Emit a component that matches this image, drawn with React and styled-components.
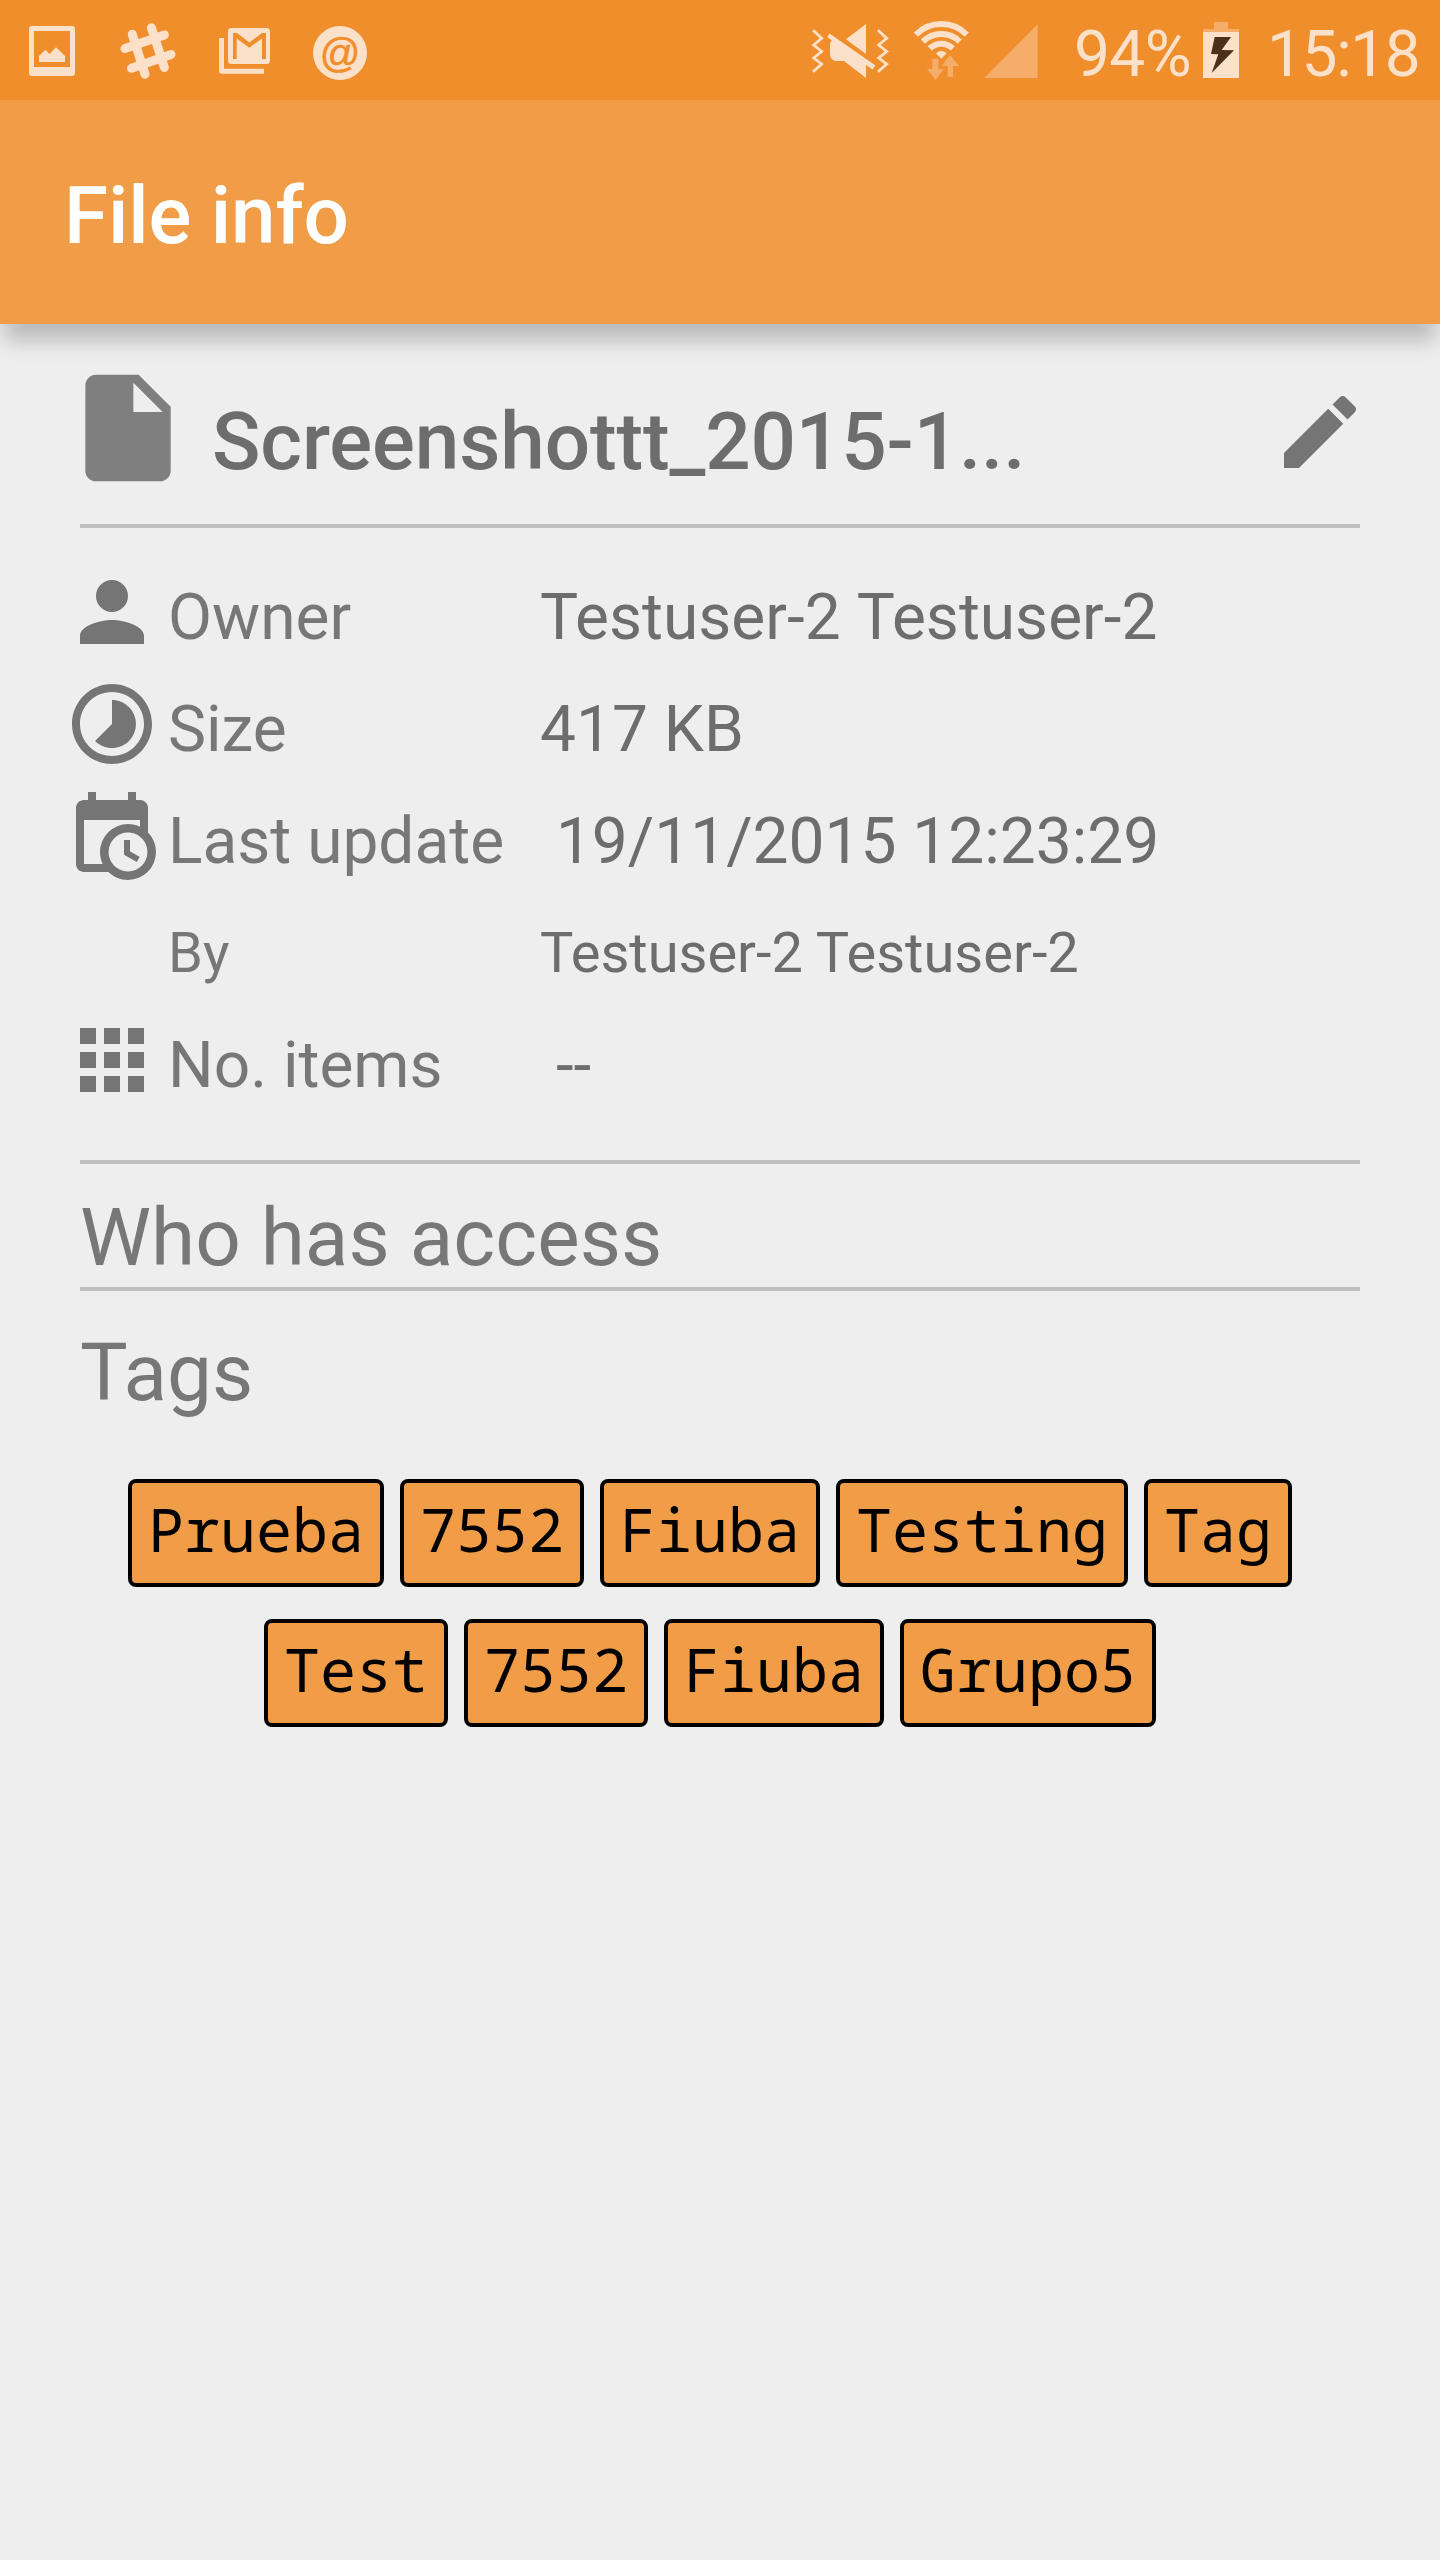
import React from "react";
import styled, { createGlobalStyle } from "styled-components";

const GlobalStyle = createGlobalStyle`
  * { box-sizing: border-box; }
  body { margin: 0; background: #eeeeee; }
`;

const Screen = styled.div`
  display: flex;
  flex-direction: column;
  width: 1440px;
  height: 2560px;
  overflow: hidden;
  background: #eeeeee;
  font-family: Roboto, "Noto Sans", sans-serif;
  color: #777777;
`;

const StatusBar = styled.header`
  display: flex;
  justify-content: space-between;
  height: 100px;
  padding: 0 20px 0 24px;
  background: #f08e2b;
  color: #fbe1ca;
`;

const Notifications = styled.div`
  display: flex;
  gap: 40px;
`;

const SystemIcons = styled.div`
  display: flex;
`;

const StatusIcon = styled.svg`
  display: block;
  flex: none;
  height: 100px;
  margin-left: ${(p) => p.$before || 0}px;
  fill: #fbe1ca;
`;

const AtBadge = styled.div`
  display: flex;
  align-items: center;
  justify-content: center;
  width: 54px;
  height: 54px;
  margin: 26px 1px 0;
  border-radius: 50%;
  background: #fbe1ca;
  color: #f08e2b;
  font: 40px/52px "Liberation Sans", Arial, sans-serif;
  -webkit-text-stroke: 0.6px #f08e2b;
`;

const StatusText = styled.span`
  width: ${(p) => p.$width}px;
  margin-left: ${(p) => p.$before}px;
  font-size: 64px;
  letter-spacing: ${(p) => p.$tracking}px;
  line-height: 110px;
  white-space: nowrap;
`;

const Toolbar = styled.div`
  position: relative;
  z-index: 1;
  display: flex;
  align-items: center;
  flex: none;
  height: 224px;
  padding: 8px 64px 0;
  background: #f19c47;
  box-shadow: 0 21px 20px -4px rgba(0, 0, 0, 0.215);
`;

const Title = styled.h1`
  margin: 0;
  color: #ffffff;
  font-size: 80px;
  font-weight: 500;
  letter-spacing: -0.15px;
  line-height: 100px;
`;

const FileHeader = styled.section`
  display: flex;
  align-items: flex-start;
  height: 200px;
  padding: 0 72px 0 64px;
`;

const Icon = styled.svg`
  display: block;
  flex: none;
  width: ${(p) => p.$size || 96}px;
  height: ${(p) => p.$size || 96}px;
  fill: ${(p) => p.$color || "#757575"};
`;

const FileIcon = styled(Icon)`
  margin-top: 40px;
`;

const EditIcon = styled(Icon)`
  margin: 60px 0 0 auto;
`;

const FileName = styled.h2`
  margin: 68px 0 0 20px;
  color: #6d6d6d;
  font-size: 80px;
  font-weight: 500;
  letter-spacing: -0.12px;
  line-height: 100px;
`;

const Divider = styled.hr`
  flex: none;
  height: 4px;
  margin: 0 80px;
  border: 0;
  background: #bfbfbf;
`;

const InfoList = styled.section`
  height: 632px;
  padding: 33px 64px 0;
`;

const InfoRow = styled.div`
  display: grid;
  grid-template-columns: 104px 372px 1fr;
  height: 112px;
  font-size: ${(p) => (p.$small ? 56 : 64)}px;
  line-height: ${(p) => (p.$small ? 112 : 114)}px;
  white-space: pre;
`;

const RowIcon = styled.div`
  padding-top: 3px;
`;

const Value = styled.span`
  color: #6d6d6d;
  word-spacing: ${(p) => p.$wordSpacing || 0}px;
`;

const SectionTitle = styled.h3`
  flex: none;
  height: ${(p) => p.$height}px;
  margin: 0;
  padding: ${(p) => p.$top}px 80px 0;
  font-size: 80px;
  font-weight: 400;
  letter-spacing: 0.06px;
  line-height: 99px;
`;

const TagList = styled.div`
  display: flex;
  flex-wrap: wrap;
  justify-content: center;
  gap: 32px 16px;
  margin: 56px 100px 0 80px;
`;

const Tag = styled.span`
  height: 108px;
  padding: 0 16px;
  border: 4px solid #000000;
  border-radius: 8px;
  background: #f19c47;
  color: #000000;
  font-family: "Droid Sans Mono", "Noto Sans Mono", "DejaVu Sans Mono", monospace;
  font-size: 60px;
  line-height: 93px;
`;

const paths = {
  file: "M6 2c-1.1 0-1.99.9-1.99 2L4 20c0 1.1.89 2 1.99 2H18c1.1 0 2-.9 2-2V8l-6-6H6zm7 7V3.5L18.5 9H13z",
  edit: "M3 17.25V21h3.75L17.81 9.94l-3.75-3.75L3 17.25zM20.71 7.04c.39-.39.39-1.02 0-1.41l-2.34-2.34c-.39-.39-1.02-.39-1.41 0l-1.83 1.83 3.75 3.75 1.83-1.83z",
  person:
    "M12 12c2.21 0 4-1.79 4-4s-1.79-4-4-4-4 1.79-4 4 1.79 4 4 4zm0 2c-2.67 0-8 1.34-8 4v2h16v-2c0-2.66-5.33-4-8-4z",
  timelapse:
    "M16.24 7.76C15.07 6.59 13.54 6 12 6v6l-4.24 4.24c2.34 2.34 6.14 2.34 8.49 0 2.34-2.34 2.34-6.14-.01-8.48zM12 2C6.48 2 2 6.48 2 12s4.48 10 10 10 10-4.48 10-10S17.52 2 12 2zm0 18c-4.42 0-8-3.58-8-8s3.58-8 8-8 8 3.58 8 8-3.58 8-8 8z",
  calendar:
    "M15 13H16.5V15.82L18.94 17.23L18.19 18.53L15 16.69V13M19 8H5V19H9.67C9.24 18.09 9 17.07 9 16A7 7 0 0 1 16 9C17.07 9 18.09 9.24 19 9.67V8M5 21C3.89 21 3 20.1 3 19V5C3 3.89 3.89 3 5 3H6V1H8V3H16V1H18V3H19A2 2 0 0 1 21 5V11.1C22.24 12.36 23 14.09 23 16A7 7 0 0 1 16 23C14.09 23 12.36 22.24 11.1 21H5M16 11.15A4.85 4.85 0 0 0 11.15 16C11.15 18.68 13.32 20.85 16 20.85A4.85 4.85 0 0 0 20.85 16C20.85 13.32 18.68 11.15 16 11.15Z",
  apps: "M4 8h4V4H4v4zm6 12h4v-4h-4v4zm-6 0h4v-4H4v4zm0-6h4v-4H4v4zm6 0h4v-4h-4v4zm6-10v4h4V4h-4zm-6 4h4V4h-4v4zm6 6h4v-4h-4v4zm0 6h4v-4h-4v4z",
};

const rows = [
  { icon: "person", label: "Owner", value: "Testuser-2 Testuser-2", wordSpacing: 1.6 },
  { icon: "timelapse", label: "Size", value: "417 KB" },
  { icon: "calendar", label: "Last update", value: " 19/11/2015 12:23:29" },
  { label: "By", value: "Testuser-2 Testuser-2", small: true },
  { icon: "apps", label: "No. items", value: " --" },
];

const tags = ["Prueba", "7552", "Fiuba", "Testing", "Tag", "Test", "7552", "Fiuba", "Grupo5"];

const FAINT = "#f5ad69";

function Status() {
  return (
    <StatusBar>
      <Notifications>
        <StatusIcon width="56" viewBox="24 0 56 100">
          <path
            fillRule="evenodd"
            d="M32 26h40a3 3 0 0 1 3 3v44a3 3 0 0 1-3 3H32a3 3 0 0 1-3-3V29a3 3 0 0 1 3-3zM34 31v36h36V31zM39 62v-6l6.3-6.3 4.4 4.3 6.3-6.7 9 8.7v6z"
          />
        </StatusIcon>
        <StatusIcon width="56" viewBox="120 0 56 100">
          <path
            fill="none"
            stroke="#fbe1ca"
            strokeWidth="9"
            strokeLinecap="round"
            d="M132.3 34.3L145 74.2M151.4 27.7L164.3 67.4M124.9 48.6L164.4 34.9M131.5 68.2L171 54.4"
          />
        </StatusIcon>
        <StatusIcon width="56" viewBox="216 0 56 100">
          <path d="M219 38h5v30.7h40v5h-42a3 3 0 0 1-3-3z" />
          <path
            fillRule="evenodd"
            d="M231.500 28h35a3.500 3.500 0 0 1 3.500 3.500v29a3.500 3.500 0 0 1-3.500 3.500h-35a3.500 3.500 0 0 1-3.500-3.500v-29a3.500 3.500 0 0 1 3.500-3.500zM233 33v26h3.700V38.500l12.600 9.200 12.700-9.200V59h4V33h-4l-12.700 9.500L237 33z"
          />
        </StatusIcon>
        <AtBadge>@</AtBadge>
      </Notifications>
      <SystemIcons>
        <StatusIcon width="78" viewBox="811 0 78 100">
          <path
            fill="none"
            stroke="#fbe1ca"
            strokeWidth="2.8"
            d="M813 30.300L821.700 38.200L813.700 45L821.700 51.500L813.700 58L821.700 64L813 71.700M878 30.300L886.700 38.200L878.700 45L886.700 51.500L878.700 58L886.700 64L878 71.700"
          />
          <path d="M866 24L846 39.300L866 54z" />
          <path d="M829.500 33.500L875.500 65.500L872.500 69.500L866 65V78L844 61H836Q830 60 830 54V45Q830 42.500 831.800 40.500L827.300 37z" />
        </StatusIcon>
        <StatusIcon $before={22} width="60" viewBox="911 0 60 100">
          <g fill="none" stroke="#fbe1ca" strokeWidth="6">
            <path d="M915.840 34.540A36 36 0 0 1 966.760 34.540" />
            <path d="M922.920 41.620A26 26 0 0 1 959.680 41.620" />
            <path d="M929.780 48.480A16.300 16.300 0 0 1 952.820 48.480" />
          </g>
          <path d="M936 53.300Q941.300 48.500 946.700 53.300L941.300 58.700z" />
          <path fill={FAINT} d="M932.300 58.700h6V69h5.400L935.700 80L927 69h5.300z" />
          <path fill={FAINT} d="M947.700 77h5.300V66h6L950 55L941.700 66h6z" />
        </StatusIcon>
        <StatusIcon $before={13} width="54" viewBox="984 0 54 100">
          <path fill={FAINT} d="M984.300 78H1037.700V24.300z" />
        </StatusIcon>
        <StatusText $before={36} $width={129} $tracking={-0.6}>94%</StatusText>
        <StatusIcon width="36" viewBox="1203 0 36 100">
          <path fill={FAINT} d="M1214 22h14v7h11v3h-36v-3h11z" />
          <path d="M1203 32h36v46h-36z" />
          <path fill="#4c3118" d="M1214.700 37h16.300l-9.300 13 12.300.3L1211.700 73l6.600-18.700-7.300-.3z" />
        </StatusIcon>
        <StatusText $before={28} $width={153} $tracking={-1.4}>15:18</StatusText>
      </SystemIcons>
    </StatusBar>
  );
}

export default function App() {
  return (
    <Screen>
      <GlobalStyle />
      <Status />
      <Toolbar>
        <Title>File info</Title>
      </Toolbar>
      <FileHeader>
        <FileIcon viewBox="0 0 24 24" $size={128} $color="#7f7f7f">
          <path d={paths.file} />
        </FileIcon>
        <FileName>Screenshottt_2015-1...</FileName>
        <EditIcon viewBox="0 0 24 24">
          <path d={paths.edit} />
        </EditIcon>
      </FileHeader>
      <Divider />
      <InfoList>
        {rows.map((row) => (
          <InfoRow key={row.label} $small={row.small}>
            <RowIcon>
              {row.icon && (
                <Icon viewBox="0 0 24 24">
                  <path d={paths[row.icon]} />
                </Icon>
              )}
            </RowIcon>
            <span>{row.label}</span>
            <Value $wordSpacing={row.wordSpacing}>{row.value}</Value>
          </InfoRow>
        ))}
      </InfoList>
      <Divider />
      <SectionTitle $height={123} $top={25}>Who has access</SectionTitle>
      <Divider />
      <SectionTitle $height={132} $top={33}>Tags</SectionTitle>
      <TagList>
        {tags.map((tag, index) => (
          <Tag key={index}>{tag}</Tag>
        ))}
      </TagList>
    </Screen>
  );
}
